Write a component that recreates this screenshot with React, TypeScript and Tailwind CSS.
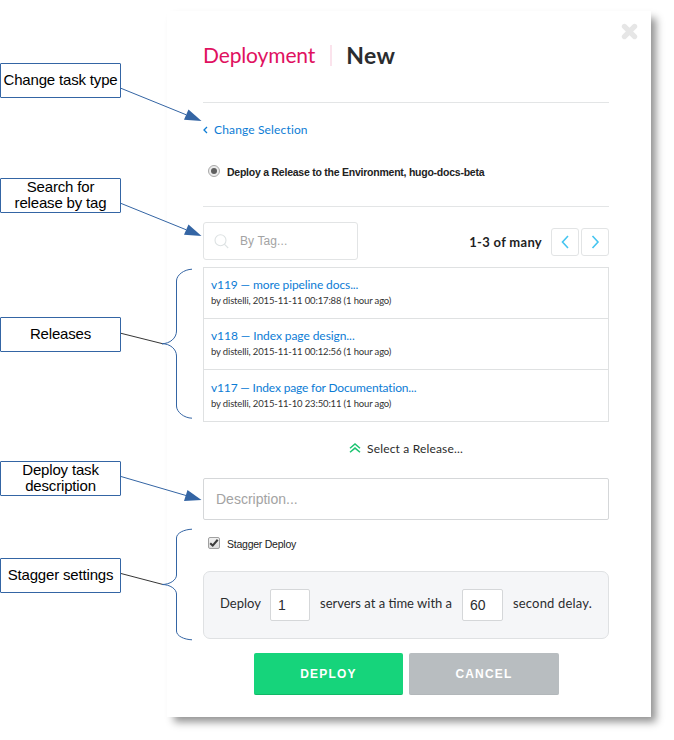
import type { ReactNode } from 'react';

const releases = [
  { title: 'v119 — more pipeline docs...', meta: 'by distelli, 2015-11-11 00:17:88 (1 hour ago)', box: 'h-[51px] pt-[9px]', ls: 'tracking-[-0.11px]' },
  { title: 'v118 — Index page design...', meta: 'by distelli, 2015-11-11 00:12:56 (1 hour ago)', box: 'h-[51px] pt-[9px]', ls: 'tracking-[-0.07px]' },
  { title: 'v117 — Index page for Documentation...', meta: 'by distelli, 2015-11-10 23:50:11 (1 hour ago)', box: 'h-[52px] pt-[10px]', ls: 'tracking-[-0.16px]' },
];

function Note({ className, children }: { className: string; children: ReactNode }) {
  return (
    <div className={`flex h-[35px] w-[121px] items-center justify-center whitespace-nowrap rounded-[1px] border border-[#3465a4] bg-white pb-[2px] text-center text-[15px] leading-4 tracking-[-0.17px] text-black ${className}`}>
      {children}
    </div>
  );
}

function Annotations() {
  return (
    <svg className="pointer-events-none absolute left-0 top-0" width="210" height="740" fill="none" stroke="#3465a4" strokeWidth="1">
      <path d="M121 88.3 186 114.7M121 203.4 186 229.7M121 476.5 186 495.5" />
      <g fill="#3465a4" stroke="none">
        <path d="M188.5 109.5 201.5 121 184 119.7Z" />
        <path d="M188.5 224.5 201.5 236 184 234.7Z" />
        <path d="M187.5 490 201.5 500 184 501Z" />
      </g>
      <path stroke="#111" strokeWidth="0.85" d="M121 333.3 163 343.8M121 573.5 163 584.5" />
      <path d="M192 269.2C184 269.5 176.5 275 176.5 281V331C176.5 338 170 343.7 162 343.7C170 343.7 176.5 349 176.5 356V406C176.5 412 184 418 192 418.2" />
      <path d="M192 529.2C184 529.5 176.5 533 176.5 538V575C176.5 580 170 584.5 162 584.5C170 584.5 176.5 589 176.5 594V631C176.5 636 184 639.5 192 639.8" />
    </svg>
  );
}

function PagerButton({ d }: { d: string }) {
  return (
    <button className="flex size-7 items-center justify-center rounded-[3px] border border-[#e2e4e5] bg-white">
      <svg width="14" height="14" viewBox="0 0 14 14" fill="none" stroke="#45c5f0" strokeWidth="1.6"><path d={d} /></svg>
    </button>
  );
}

export default function App() {
  return (
    <div className="relative flex h-[740px] w-[674px] overflow-hidden bg-white font-['Liberation_Sans',Arial,sans-serif]">
      <aside className="w-[167px] shrink-0 pt-[63px]">
        <Note className="">Change task type</Note>
        <Note className="mt-20">Search for<br />release by tag</Note>
        <Note className="mt-[104px]">Releases</Note>
        <Note className="mt-[109px]">Deploy task<br />description</Note>
        <Note className="mt-[62px]">Stagger settings</Note>
      </aside>

      <main className="mt-[11px] h-[706px] w-[484px] shrink-0 bg-white pl-9 pr-[42px] font-['Lato',sans-serif] shadow-[6px_6px_8px_-1px_#929292]">
        <header className="relative flex h-[92px] items-center whitespace-nowrap border-b border-[#e3e5e6] pb-[3px]">
          <h1 className="text-[21px] leading-7 tracking-[-0.13px] text-[#e0115f]">Deployment</h1>
          <span className="ml-[15px] h-[21px] w-[2px] bg-[#fbe3ec]" />
          <h2 className="ml-[14px] text-[23px] font-bold leading-7 tracking-[0.45px] text-[#2b2d2f]">New</h2>
          <svg className="absolute -right-[29px] top-[12px]" width="17" height="17" viewBox="0 0 17 17" stroke="#e6e6e6" strokeWidth="5.2" strokeLinecap="round">
            <path d="M3.4 3.4 13.6 13.6M13.6 3.4 3.4 13.6" />
          </svg>
        </header>

        <section className="h-[104px] border-b border-[#e3e5e6] pt-[18px]">
          <a className="flex h-[18px] items-center text-[12px] tracking-[0.15px] text-[#0c7cd5]">
            <svg className="mr-[6px]" width="5" height="8" viewBox="0 0 5 8" fill="none" stroke="#0c7cd5" strokeWidth="1.3"><path d="M4 1 1 4 4 7" /></svg>
            Change Selection
          </a>
          <label className="ml-[5px] mt-[26px] flex h-[14px] items-center font-['Liberation_Sans'] text-[10.5px] font-bold tracking-[-0.24px] text-[#222]">
            <span className="mr-[7px] flex size-3 -translate-y-px items-center justify-center rounded-full border border-[#a9a9a9] bg-[#ececec]">
              <span className="size-[6px] rounded-full bg-[#5f5f5f]" />
            </span>
            <span className="translate-y-px">Deploy a Release to the Environment, hugo-docs-beta</span>
          </label>
        </section>

        <div className="mt-[15px] flex h-[38px] items-center">
          <div className="flex h-[38px] w-[155px] items-center rounded-[3px] border border-[#e2e4e5] pl-[10px]">
            <svg width="15" height="15" viewBox="0 0 15 15" fill="none" stroke="#dde2e3" strokeWidth="1.1"><circle cx="6.5" cy="6.2" r="5.5" /><path d="M10.3 10.2 14.2 14" /></svg>
            <span className="ml-[11px] font-['Liberation_Sans'] text-[12px] tracking-[0.1px] text-[#a3a3a3]">By Tag...</span>
          </div>
          <span className="ml-auto mr-[9px] mt-[3px] whitespace-nowrap text-[13px] font-bold tracking-[0.3px] text-[#1f1f1f]">1-3 of many</span>
          <div className="mt-[2px] flex gap-[2px]">
            <PagerButton d="M10 1 4.5 7 10 13" />
            <PagerButton d="M4.5 1 10 7 4.5 13" />
          </div>
        </div>

        <ul className="mt-[7px] border border-b-0 border-[#dfe1e2]">
          {releases.map((r) => (
            <li key={r.title} className={`border-b border-[#dfe1e2] pl-[7px] ${r.box}`}>
              <div className={`whitespace-nowrap text-[12px] leading-4 text-[#0c7cd5] ${r.ls}`}>{r.title}</div>
              <div className="mt-px whitespace-nowrap text-[9.5px] leading-[14px] tracking-[-0.15px] text-[#333]">{r.meta}</div>
            </li>
          ))}
        </ul>

        <div className="mt-[18px] flex h-[18px] items-center justify-center text-[12px] tracking-[0.16px] text-[#2b2b2b]">
          <svg className="mr-[6px] -translate-y-px" width="12" height="10" viewBox="0 0 12 10" fill="none" stroke="#1cc471" strokeWidth="1.5"><path d="M1 5.2 6 1 11 5.2M1 9.3 6 5.1 11 9.3" /></svg>
          <span>Select a Release...</span>
        </div>

        <div className="mt-5 flex h-[42px] items-center rounded-[2px] border border-[#d5d7d9] pl-3 font-['Liberation_Sans'] text-[14px] text-[#a3a3a3]">Description...</div>

        <label className="ml-[5px] mt-[17px] flex h-[14px] items-center font-['Liberation_Sans'] text-[10.5px] tracking-[-0.24px] text-[#222]">
          <span className="mr-[7px] flex size-3 -translate-y-px items-center justify-center rounded-[2px] border border-[#a0a0a0] bg-linear-to-b from-[#f1f1f1] to-[#dcdcdc]">
            <svg width="10" height="10" viewBox="0 0 10 10" fill="none" stroke="#3c3c3c" strokeWidth="2.1"><path d="M1.2 5.3 3.7 7.6 8.7 1.7" /></svg>
          </span>
          <span className="translate-y-px">Stagger Deploy</span>
        </label>

        <div className="mt-5 flex h-[68px] items-center whitespace-nowrap rounded-[7px] border border-[#dfe1e3] bg-[#f5f6f8] pl-4 text-[13px] text-[#2b2d2f]">
          <span className="w-[50px] -translate-y-px">Deploy</span>
          <span className="flex h-8 w-10 items-center rounded-[2px] border border-[#d5d7d9] bg-white pl-[7px] font-['Liberation_Sans'] text-[14px]">1</span>
          <span className="ml-[10px] w-[142px] -translate-y-px">servers at a time with a</span>
          <span className="flex h-8 w-[41px] items-center rounded-[2px] border border-[#d5d7d9] bg-white pl-[7px] font-['Liberation_Sans'] text-[14px]">60</span>
          <span className="ml-[10px] -translate-y-px tracking-[0.18px]">second delay.</span>
        </div>

        <div className="ml-[51px] mt-[14px] flex gap-[6px] font-['Liberation_Sans'] text-[12px] font-bold tracking-[1.2px] text-white">
          <button className="h-[42px] w-[149px] rounded-[2px] border-b border-[#12b766] bg-[#16d47b]">DEPLOY</button>
          <button className="h-[42px] w-[150px] rounded-[2px] border-b border-[#b2b7ba] bg-[#b8bdc0]">CANCEL</button>
        </div>
      </main>
      <Annotations />
    </div>
  );
}
